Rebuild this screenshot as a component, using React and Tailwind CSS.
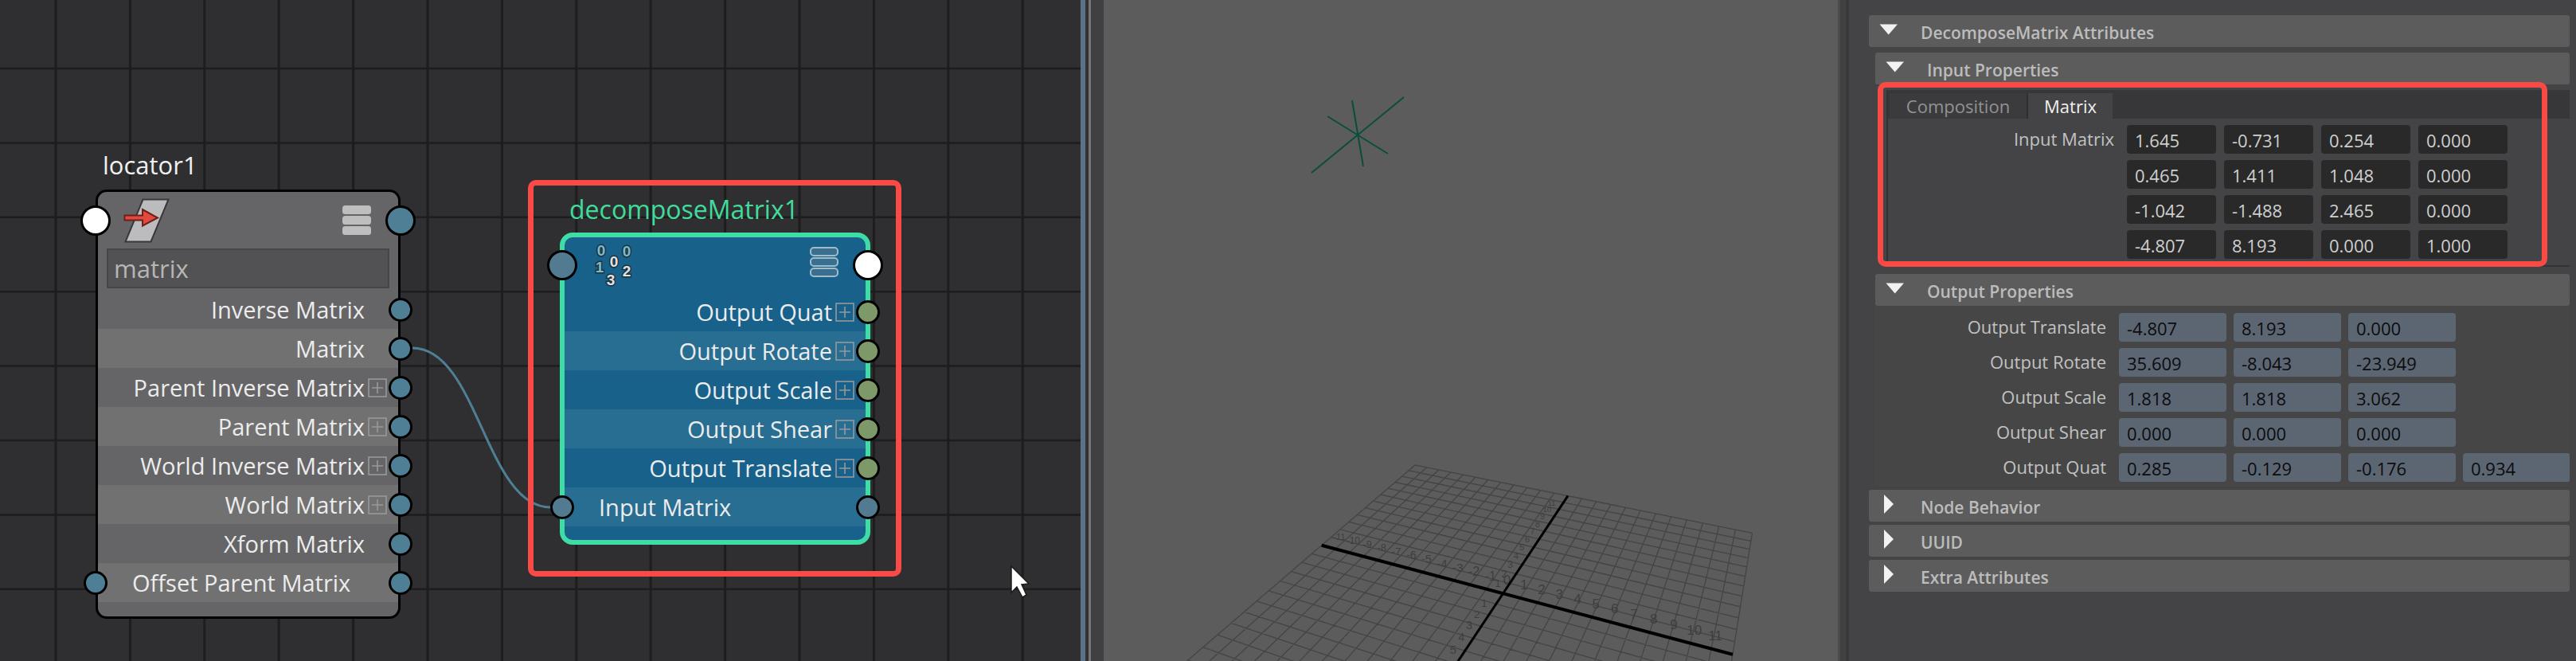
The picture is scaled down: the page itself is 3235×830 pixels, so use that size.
import React from 'react';

/* ---------- Node editor ---------- */

const GRID = 93.4;
const V_LINES = Array.from({ length: 14 }, (_, i) => 70 + i * GRID);
const H_LINES = Array.from({ length: 9 }, (_, i) => 86 + i * GRID);

function CanvasGrid() {
  return (
    <svg className="absolute inset-0 h-full w-full" aria-hidden="true">
      {V_LINES.map((x) => (
        <line key={x} x1={x} x2={x} y1="0" y2="100%" stroke="#1d1d1e" strokeWidth="3" />
      ))}
      {H_LINES.map((y) => (
        <line key={y} x1="0" x2="100%" y1={y} y2={y} stroke="#1d1d1e" strokeWidth="2.5" />
      ))}
    </svg>
  );
}

const PORT_COLORS = {
  blue: 'bg-[#4f7f94]',
  slate: 'bg-[#527b91]',
  green: 'bg-[#7d996a]',
  white: 'bg-white',
};

function Port({ side, color, large }) {
  return (
    <span
      className={`absolute top-1/2 -translate-y-1/2 rounded-full border-[3px] border-black ${PORT_COLORS[color]} ${
        large ? 'size-[38px]' : 'size-[30px]'
      } ${side === 'left' ? (large ? '-left-[22px]' : '-left-[18px]') : large ? '-right-[22px]' : '-right-[18px]'}`}
    />
  );
}

function ExpandButton({ label }) {
  return (
    <button type="button" aria-label={`Expand ${label}`} className="size-6 shrink-0 text-[#96999b]">
      <svg viewBox="0 0 24 24" className="size-6" fill="none" stroke="currentColor" strokeWidth="1.6">
        <rect x="1" y="1" width="22" height="22" />
        <path d="M12 5v14M5 12h14" />
      </svg>
    </button>
  );
}

function NodeRow({ label, expand, input, band, outColor, inColor }) {
  return (
    <li className={`relative flex h-[49px] items-center text-[29px] leading-none text-[#ececec] ${band}`}>
      {input ? (
        <span className="pl-[43px]">{label}</span>
      ) : (
        <span className="flex flex-1 items-center justify-end gap-1 pr-[14px]">
          {label}
          {expand ? <ExpandButton label={label} /> : <span className="size-6 shrink-0" />}
        </span>
      )}
      {inColor && <Port side="left" color={inColor} />}
      <Port side="right" color={outColor} />
    </li>
  );
}

function LocatorIcon() {
  return (
    <svg viewBox="0 0 60 58" width="60" height="58" aria-hidden="true">
      <path d="M25.500 2.500H57.500L35.500 55.500H3.500Z" fill="#bcbcbe" stroke="#38383a" strokeWidth="2" />
      <path d="M2.500 22.500H25V15L44 25.500L25 35.500V28.500H2.500Z" fill="#e2493f" stroke="#6e201b" strokeWidth="2" />
    </svg>
  );
}

const DIGITS = [
  ['0', 7, 9, '#7fb9c4'],
  ['0', 39, 10, '#7fb9c4'],
  ['0', 23, 23, '#e4e0e0'],
  ['1', 5, 30, '#7fb9c4'],
  ['2', 39, 35, '#e4e0e0'],
  ['3', 19, 46, '#e4e0e0'],
];

function DecomposeIcon() {
  return (
    <svg viewBox="0 0 50 56" width="50" height="56" className="overflow-visible" aria-hidden="true">
      {DIGITS.map(([d, x, y, fill]) => (
        <text
          key={`${x}-${y}`}
          x={x}
          y={y + 7}
          textAnchor="middle"
          className='font-["Liberation_Sans",sans-serif] text-[19px] font-bold'
          fill={fill}
          stroke="#1b3442"
          strokeWidth="3"
          paintOrder="stroke"
        >
          {d}
        </text>
      ))}
    </svg>
  );
}

function MenuButton({ outlined }) {
  return (
    <button type="button" aria-label="Node display mode" className="h-[38px] w-9">
      <svg viewBox="0 0 36 38" width="36" height="38">
        {[0, 13, 26].map((y) =>
          outlined ? (
            <rect key={y} x="1" y={y + 1} width="34" height="10" rx="4" fill="#3a6f8f" stroke="#9fbccb" strokeWidth="2" />
          ) : (
            <rect key={y} x="0" y={y} width="36" height="11" rx="3.500" fill="#bebebf" />
          ),
        )}
      </svg>
    </button>
  );
}

const LOCATOR_ROWS = [
  { label: 'Inverse Matrix' },
  { label: 'Matrix' },
  { label: 'Parent Inverse Matrix', expand: true },
  { label: 'Parent Matrix', expand: true },
  { label: 'World Inverse Matrix', expand: true },
  { label: 'World Matrix', expand: true },
  { label: 'Xform Matrix' },
  { label: 'Offset Parent Matrix', input: true, inColor: 'blue' },
];

const DECOMPOSE_ROWS = [
  { label: 'Output Quat', expand: true, outColor: 'green' },
  { label: 'Output Rotate', expand: true, outColor: 'green' },
  { label: 'Output Scale', expand: true, outColor: 'green' },
  { label: 'Output Shear', expand: true, outColor: 'green' },
  { label: 'Output Translate', expand: true, outColor: 'green' },
  { label: 'Input Matrix', input: true, inColor: 'slate', outColor: 'slate' },
];

function NodeEditor() {
  return (
    <section aria-label="Node editor" className="relative overflow-hidden bg-[#2f2f31]">
      <CanvasGrid />

      <h2 className="absolute left-[129px] top-[187px] text-[31px] leading-10 text-[#f0f0f0]">locator1</h2>
      <div className="absolute left-[120px] top-[238px] w-[383px] rounded-[14px] border-[3px] border-black bg-[#656567] pb-[18px]">
        <div className="relative flex h-[71px] items-center justify-between pl-[31px] pr-[34px]">
          <LocatorIcon />
          <MenuButton />
          <Port side="left" color="white" large />
          <Port side="right" color="blue" large />
        </div>
        <div className="mb-[2px] px-[11px]">
          <input
            type="text"
            aria-label="Filter attributes"
            defaultValue="matrix"
            className="block h-[50px] w-full border-2 border-[#464648] bg-[#525254] px-[7px] text-[31px] leading-none text-[#b8b6b4] outline-none"
          />
        </div>
        <ul>
          {LOCATOR_ROWS.map((row, i) => (
            <NodeRow key={row.label} outColor="blue" band={i % 2 ? 'bg-[#717171]' : ''} {...row} />
          ))}
        </ul>
      </div>

      <h2 className="absolute left-[715px] top-[243px] text-[32px] leading-10 text-[#3fdc9c]">decomposeMatrix1</h2>
      <div className="absolute left-[703px] top-[292px] w-[390px] rounded-[16px] border-[6px] border-[#3fdda6] bg-[#17618b] pb-[17px]">
        <div className="relative flex h-[69px] items-start justify-between pb-1 pl-[39px] pr-[34px] pt-[7px]">
          <DecomposeIcon />
          <span className="pt-[5px]">
            <MenuButton outlined />
          </span>
          <Port side="left" color="slate" large />
          <Port side="right" color="white" large />
        </div>
        <ul>
          {DECOMPOSE_ROWS.map((row, i) => (
            <NodeRow key={row.label} band={i % 2 ? 'bg-[#286d92]' : ''} {...row} />
          ))}
        </ul>
      </div>

      <svg className="pointer-events-none absolute inset-0 h-full w-full" aria-hidden="true">
        <path d="M518 437C600 437 610 637 691 637" fill="none" stroke="#4f7f94" strokeWidth="3" />
        <path
          d="M1270 711V744L1277 737L1284 750L1289 747L1283 734L1292 733Z"
          fill="#fff"
          stroke="#1c1c1d"
          strokeWidth="1.500"
        />
      </svg>

      <div className="pointer-events-none absolute left-[663px] top-[226px] h-[498px] w-[469px] rounded-[10px] border-[7px] border-[#f94a46]" />
    </section>
  );
}

/* ---------- 3D viewport ---------- */

const UNITS = 12;

// Perspective mapping of the ground plane: x and z in scene units.
function project(x, z) {
  const u = (x + UNITS) / (2 * UNITS);
  const v = (z + UNITS) / UNITS;
  const w = 1 - 0.1705 * u - 0.1877 * v;
  return [(1776 + 48.5 * u - 428.6 * v) / w - 1385, (584 - 28.8 * u - 27.8 * v) / w];
}

const seg = (a, b) => `M${a[0].toFixed(1)} ${a[1].toFixed(1)}L${b[0].toFixed(1)} ${b[1].toFixed(1)}`;
const STEPS = Array.from({ length: 2 * UNITS + 1 }, (_, i) => i - UNITS);
const PLANE = STEPS.map((s) => seg(project(s, -UNITS), project(s, UNITS)) + seg(project(-UNITS, s), project(UNITS, s))).join('');
const X_LABELS = STEPS.slice(1, -1);
const Z_LABELS = X_LABELS.filter((n) => n !== 0 && n < 6);

function Viewport() {
  return (
    <section aria-label="Perspective view" className="relative overflow-hidden bg-[#5c5c5c]">
      <svg className="absolute inset-0 h-full w-full" fill="none">
        <path d={PLANE} stroke="#444444" strokeWidth="1.300" />
        <g fill="#3e3e3e" className='font-["Liberation_Sans",sans-serif]' textAnchor="middle">
          {X_LABELS.map((n) => {
            const [x, y] = project(n, 0);
            return (
              <text key={n} x={x + 5} y={y - 11} fontSize={17 + Math.min(n, 0) / 2}>
                {n}
              </text>
            );
          })}
          {Z_LABELS.map((n) => {
            const [x, y] = project(0, n);
            return (
              <text key={n} x={x - 15} y={y + 4} fontSize={13 + n / 3}>
                {Math.abs(n)}
              </text>
            );
          })}
        </g>
        <path d={seg(project(0, -UNITS), project(0, UNITS))} stroke="#000" strokeWidth="3" />
        <path d={seg(project(-UNITS, 0), project(UNITS, 0))} stroke="#000" strokeWidth="4" />
        <path d="M312 126L326 209M281 146L357 193M261 217L377 122" stroke="#0b4d3d" strokeWidth="2" />
      </svg>
    </section>
  );
}

/* ---------- Attribute editor ---------- */

function Header({ title, open, nested }) {
  return (
    <button
      type="button"
      aria-expanded={!!open}
      className={`flex h-10 items-center rounded-[3px] bg-[#5c5c5c] text-left ${nested ? 'ml-2' : ''}`}
    >
      <span className="flex w-[65px] shrink-0 pb-1 pl-[13px]">
        {open ? (
          <svg viewBox="0 0 24 14" width="24" height="14" aria-hidden="true">
            <path d="M0.500 0.500H23L11.700 13.500Z" fill="#f2f2f2" />
          </svg>
        ) : (
          <svg viewBox="0 0 24 24" width="24" height="24" aria-hidden="true">
            <path d="M6 0L18 12L6 24Z" fill="#f2f2f2" />
          </svg>
        )}
      </span>
      <span className="pt-1 text-[21px] font-semibold leading-none text-[#bcbcbc]">{title}</span>
    </button>
  );
}

const INPUT_MATRIX = [
  ['1.645', '-0.731', '0.254', '0.000'],
  ['0.465', '1.411', '1.048', '0.000'],
  ['-1.042', '-1.488', '2.465', '0.000'],
  ['-4.807', '8.193', '0.000', '1.000'],
];

const OUTPUTS = [
  ['Output Translate', ['-4.807', '8.193', '0.000']],
  ['Output Rotate', ['35.609', '-8.043', '-23.949']],
  ['Output Scale', ['1.818', '1.818', '3.062']],
  ['Output Shear', ['0.000', '0.000', '0.000']],
  ['Output Quat', ['0.285', '-0.129', '-0.176', '0.934']],
];

function AttributeEditor() {
  return (
    <section aria-label="Attribute editor" className="flex flex-col gap-1 overflow-hidden border-l-[4px] border-[#393939] bg-[#444446] pl-[25px] pr-2 pt-[19px]">
      <Header title="DecomposeMatrix Attributes" open />
      <div className="flex flex-col pt-[3px]">
        <Header title="Input Properties" open nested />

        <div className="relative ml-[22px] mt-[7px] border-b-2 border-l-2 border-[#333334] pb-2">
          <div role="tablist" className="flex h-9 items-end bg-[#373739] pl-[2px]">
            <button
              type="button"
              role="tab"
              aria-selected="false"
              className="h-8 w-[174px] border-r-2 border-[#2e2e30] bg-[#3b3b3d] text-[22px] leading-none text-[#929292]"
            >
              Composition
            </button>
            <button
              type="button"
              role="tab"
              aria-selected="true"
              className="h-8 w-[106px] bg-[#444446] text-[22px] leading-none text-[#f0f0f0]"
            >
              Matrix
            </button>
          </div>
          <div role="tabpanel" className="flex gap-4 pt-2">
            <span id="input-matrix" className="w-[284px] shrink-0 pt-[6px] text-right text-[22px] leading-none text-[#c2c2c2]">
              Input Matrix
            </span>
            <div className="flex flex-col gap-2">
              {INPUT_MATRIX.map((row, r) => (
                <div key={r} className="flex gap-[10px]">
                  {row.map((v, c) => (
                    <input
                      key={c}
                      type="text"
                      aria-labelledby="input-matrix"
                      defaultValue={v}
                      className="h-9 w-28 rounded-[4px] bg-[#29292a] pl-[10px] pt-[2px] text-[22px] leading-none text-[#cfcfcf] outline-none"
                    />
                  ))}
                </div>
              ))}
            </div>
          </div>
          <div className="pointer-events-none absolute -bottom-[2px] -left-[13px] -top-[10px] right-7 rounded-[10px] border-[7px] border-[#f94a46]" />
        </div>

        <div className="flex flex-col pt-[9px]">
          <Header title="Output Properties" open nested />
        </div>
        <div className="ml-2 flex flex-col gap-2 bg-[#464646] pb-[6px] pt-[9px]">
          {OUTPUTS.map(([label, values]) => {
            const id = label.toLowerCase().replace(' ', '-');
            return (
              <div key={label} className="flex gap-4 overflow-hidden">
                <span id={id} className="w-[290px] shrink-0 pt-[6px] text-right text-[22px] leading-none text-[#c2c2c2]">
                  {label}
                </span>
                <div className="flex gap-[9px]">
                  {values.map((v, i) => (
                    <input
                      key={i}
                      type="text"
                      readOnly
                      aria-labelledby={id}
                      value={v}
                      className="h-9 w-[135px] shrink-0 rounded-[4px] bg-[#5c6673] pl-[10px] pt-[2px] text-[22px] leading-none text-[#0c0c0e] outline-none"
                    />
                  ))}
                </div>
              </div>
            );
          })}
        </div>
      </div>
      <Header title="Node Behavior" />
      <Header title="UUID" />
      <Header title="Extra Attributes" />
    </section>
  );
}

export default function App() {
  return (
    <main className='grid min-h-screen grid-cols-[1357fr_auto_922fr_10px_917fr] bg-[#444446] font-["Open_Sans","Noto_Sans",sans-serif]'>
      <NodeEditor />
      <div className="flex" role="separator">
        <div className="w-[6px] bg-[#5a738a]" />
        <div className="w-1 bg-[#303236]" />
        <div className="w-[3px] bg-[#777575]" />
        <div className="w-4 bg-[#404042]" />
      </div>
      <Viewport />
      <div className="border-l-[3px] border-[#4b4b4b] bg-[#414142]" role="separator" />
      <AttributeEditor />
    </main>
  );
}
